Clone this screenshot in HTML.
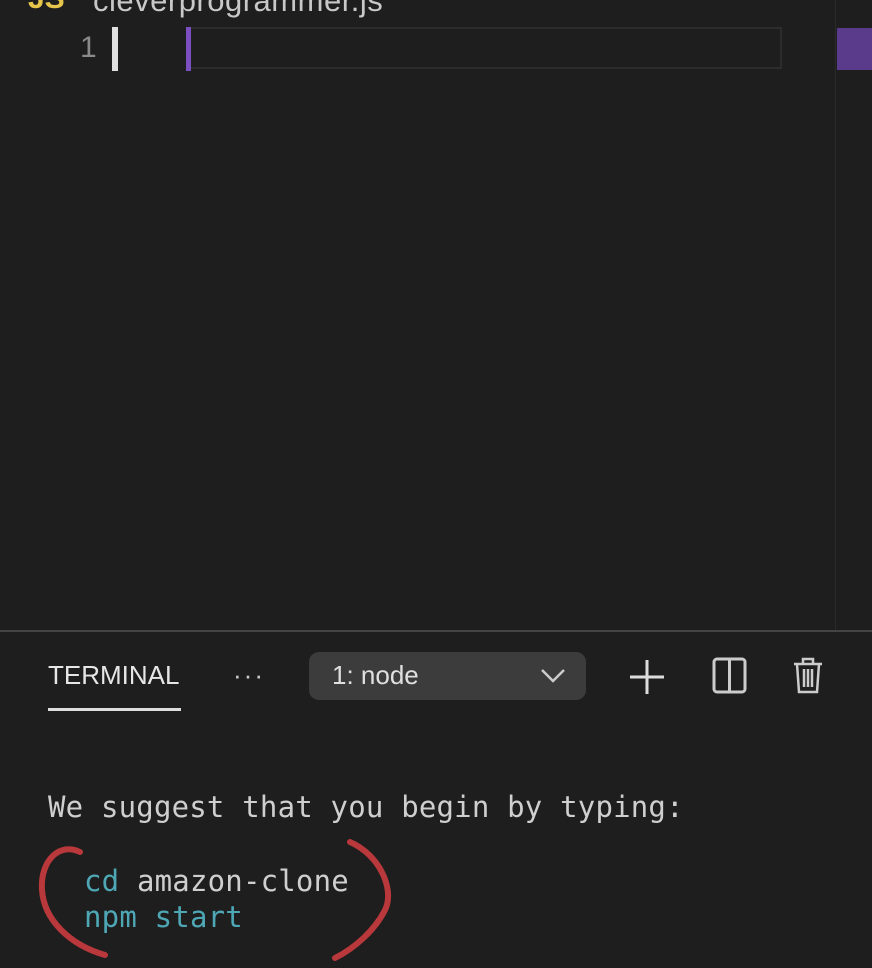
<!DOCTYPE html>
<html><head><style>
body{margin:0;width:872px;height:968px;background:#1e1e1e;overflow:hidden;position:relative;font-family:"Liberation Sans",sans-serif}
.a{position:absolute}
.mono{font-family:"DejaVu Sans Mono","Liberation Mono",monospace;font-size:29px;white-space:pre;letter-spacing:0.2px}
</style></head><body>
<div class="a" style="left:28px;top:-18px;font-size:30px;color:#e5c54a;font-weight:bold">JS</div>
<div class="a" style="left:93px;top:-17px;font-size:31px;color:#c8c8c8;letter-spacing:0.5px">cleverprogrammer.js</div>
<div class="a" style="left:80px;top:31px;font-size:30px;color:#8a8a8a">1</div>
<div class="a" style="left:112px;top:27px;width:6px;height:44px;background:#e0e0e0"></div>
<div class="a" style="left:186px;top:27px;width:596px;height:42px;border:2px solid #2c2c2c;box-sizing:border-box"></div>
<div class="a" style="left:186px;top:27px;width:5px;height:44px;background:#7b4fbf"></div>
<div class="a" style="left:835px;top:0;width:1px;height:630px;background:#2a2a2a"></div>
<div class="a" style="left:837px;top:28px;width:35px;height:42px;background:#5a3a8a"></div>
<div class="a" style="left:0;top:630px;width:872px;height:2px;background:#444"></div>
<div class="a" style="left:48px;top:660px;font-size:26px;color:#e6e6e6">TERMINAL</div>
<div class="a" style="left:48px;top:708px;width:133px;height:3px;background:#ddd"></div>
<div class="a" style="left:233px;top:660px;font-size:26px;color:#ccc;letter-spacing:2px">···</div>
<div class="a" style="left:309px;top:652px;width:277px;height:48px;background:#3c3c3c;border-radius:10px"></div>
<div class="a" style="left:332px;top:660px;font-size:26px;color:#e0e0e0">1: node</div>
<svg class="a" style="left:540px;top:666px" width="26" height="18"><path d="M2 4 L13 15 L24 4" stroke="#ccc" stroke-width="2.5" fill="none"/></svg>
<svg class="a" style="left:628px;top:658px" width="38" height="38"><path d="M19 2V36M2 19H36" stroke="#ddd" stroke-width="3"/></svg>
<svg class="a" style="left:712px;top:657px" width="36" height="38"><rect x="2" y="2" width="31" height="33" rx="3" stroke="#ccc" stroke-width="3" fill="none"/><path d="M17.5 2V35" stroke="#ccc" stroke-width="3"/></svg>
<svg class="a" style="left:792px;top:655px" width="32" height="40"><path d="M2 9H30M11 9V4H21V9M5 9L7 37H25L27 9M12 14V32M16 14V32M20 14V32" stroke="#ccc" stroke-width="2.5" fill="none"/></svg>
<div class="a mono" style="left:48px;top:790px;color:#cfcfcf">We suggest that you begin by typing:</div>
<div class="a mono" style="left:84px;top:864px;color:#cfcfcf"><span style="color:#4ea7b5">cd</span> amazon-clone</div>
<div class="a mono" style="left:84px;top:900px;color:#4ea7b5">npm start</div>
<svg class="a" style="left:0;top:780px" width="440" height="188"><path d="M80 72 C60 62 40 80 42 110 C44 140 70 165 105 175" stroke="#b8383b" stroke-width="6" fill="none" stroke-linecap="round"/><path d="M350 62 C380 75 395 110 385 130 C375 150 355 168 335 178" stroke="#b8383b" stroke-width="6" fill="none" stroke-linecap="round"/></svg>
</body></html>
